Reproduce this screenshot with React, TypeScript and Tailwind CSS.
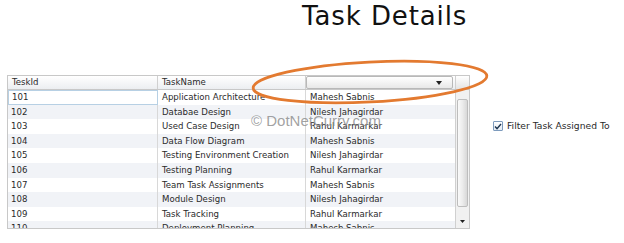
import React from 'react';

type Task = { id: number; name: string; owner: string };

const tasks: Task[] = [
  { id: 101, name: 'Application Architecture', owner: 'Mahesh Sabnis' },
  { id: 102, name: 'Databae Design', owner: 'Nilesh Jahagirdar' },
  { id: 103, name: 'Used Case Design', owner: 'Rahul Karmarkar' },
  { id: 104, name: 'Data Flow Diagram', owner: 'Mahesh Sabnis' },
  { id: 105, name: 'Testing Environment Creation', owner: 'Nilesh Jahagirdar' },
  { id: 106, name: 'Testing Planning', owner: 'Rahul Karmarkar' },
  { id: 107, name: 'Team Task Assignments', owner: 'Mahesh Sabnis' },
  { id: 108, name: 'Module Design', owner: 'Nilesh Jahagirdar' },
  { id: 109, name: 'Task Tracking', owner: 'Rahul Karmarkar' },
  { id: 110, name: 'Deployment Planning', owner: 'Mahesh Sabnis' },
];

function App() {
  return (
    <div className="relative w-[624px] h-[243px] overflow-hidden bg-white text-[#2a2a2a] font-['DejaVu_Sans',Verdana,sans-serif]">
      {/* title */}
      <h1 className="pl-[302px] pt-[3px] text-[26px] leading-[27px] font-normal text-[#111] tracking-[0.9px]">Task Details</h1>

      <div className="grid grid-cols-[470px_154px] items-start mt-[45px]">
        {/* grid */}
        <div className="ml-[7px] w-[463px] h-[154px] border border-[#c8c8c8] bg-white flex flex-col text-[8.6px] leading-none">
          {/* header */}
          <div className="flex h-[14px] border-b border-[#c8c8c8] bg-gradient-to-b from-white to-[#eceef1]">
            <div className="w-[150px] border-r border-[#d0d0d0] flex items-center pl-[4px]">TeskId</div>
            <div className="w-[148px] border-r border-[#d0d0d0] flex items-center pl-[4px]">TaskName</div>
            <div className="w-[149px] flex items-center pr-[2px]">
              <div className="w-full h-[13px] border border-[#b8b8b8] rounded-[2px] bg-gradient-to-b from-white to-[#e8e8e8] flex items-center justify-end pr-[10px]">
                <svg width="6" height="4" viewBox="0 0 6 4"><path d="M0 0h6L3 4z" fill="#222" /></svg>
              </div>
            </div>
            <div className="flex-1 border-l border-[#d0d0d0] bg-gradient-to-b from-white to-[#e4e4e4]" />
          </div>

          {/* body */}
          <div className="flex flex-1 overflow-hidden">
            <div className="w-[447px] overflow-hidden">
              {tasks.map((t, i) => (
                <div key={t.id} className={`flex h-[14.6px] ${i % 2 === 1 ? 'bg-[#f1f3f7]' : 'bg-white'}`}>
                  <div className={`w-[150px] shrink-0 flex items-center pl-[3px] ${i === 0 ? 'border border-[#b7d0e4]' : 'border-r border-[#d8d8d8]'}`}>{t.id}</div>
                  <div className="w-[148px] shrink-0 flex items-center pl-[4px] border-r border-[#d8d8d8]">{t.name}</div>
                  <div className="w-[149px] shrink-0 flex items-center pl-[4px]">{t.owner}</div>
                </div>
              ))}
            </div>
            {/* scrollbar */}
            <div className="flex-1 border-l border-[#d0d0d0] bg-[#f1f1f1] flex flex-col items-center pt-[9px] pb-[2px]">
              <div className="w-[11px] h-[108px] rounded-[2px] border border-[#bdbdbd] bg-gradient-to-r from-[#fafafa] via-[#ececec] to-[#d8d8d8]" />
              <div className="flex-1" />
              <svg width="5" height="3" viewBox="0 0 5 3" className="mb-[3px]"><path d="M0 0h5L2.5 3z" fill="#222" /></svg>
            </div>
          </div>
        </div>

        {/* filter checkbox */}
        <div className="pl-[23px] pt-[46px]">
          <label className="flex items-center gap-[4px] text-[9.2px] leading-none text-[#2a2a2a] whitespace-nowrap">
            <span className="w-[10px] h-[10px] shrink-0 border border-[#7d9bbd] rounded-[1px] bg-gradient-to-b from-white to-[#e3ebf4] flex items-center justify-center">
              <svg width="8" height="7" viewBox="0 0 8 7"><path d="M1 3.6l2 2L7 1" fill="none" stroke="#1d3550" strokeWidth="1.4" /></svg>
            </span>
            Filter Task Assigned To
          </label>
        </div>
      </div>

      {/* watermark */}
      <div className="absolute left-[251px] top-[113px] text-[15px] leading-none text-[#8a8a8a]/80 font-['Liberation_Sans',Arial,sans-serif]">© DotNetCurry.com</div>

      {/* highlight ellipse */}
      <svg className="absolute left-0 top-0 pointer-events-none" width="624" height="243">
        <ellipse cx="370" cy="82" rx="117" ry="20" fill="none" stroke="#e37a30" strokeWidth="2.8" transform="rotate(-3 370 82)" />
      </svg>
    </div>
  );
}

export default App;
